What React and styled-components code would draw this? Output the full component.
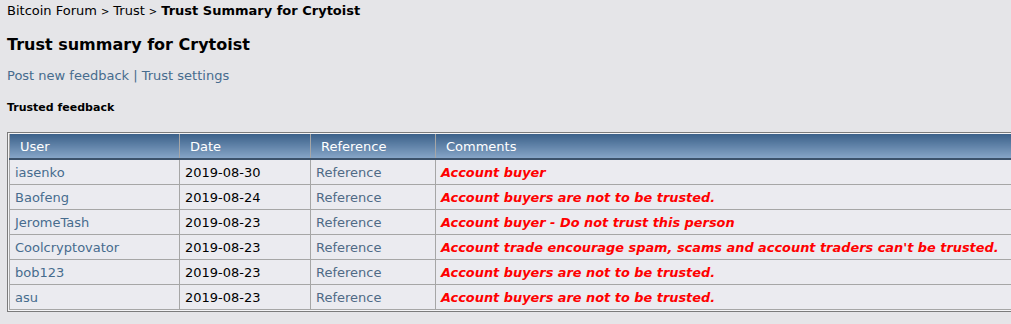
import React from "react";
import styled, { createGlobalStyle } from "styled-components";

const GlobalStyle = createGlobalStyle`
  html, body {
    margin: 0;
    padding: 0;
    background: #e5e5e8;
    overflow: hidden;
    font-family: Verdana, "DejaVu Sans", sans-serif;
  }
`;

const Page = styled.div`
  padding: 0 0 0 7px;
  color: #000;
`;

const Crumbs = styled.div`
  font-size: 13px;
  line-height: 22px;
`;

const Sep = styled.span`
  font-size: 10px;
  margin: 0 4px;
`;

const Title = styled.h1`
  margin: 11px 0 0;
  font-size: 16px;
  line-height: 22px;
  font-weight: bold;
`;

const Links = styled.div`
  margin-top: 9px;
  font-size: 13px;
  line-height: 22px;
  color: #476c8e;
`;

const Link = styled.a`
  color: #476c8e;
  text-decoration: none;
`;

const Section = styled.div`
  margin-top: 13px;
  font-size: 11px;
  font-weight: bold;
  line-height: 16px;
`;

const Frame = styled.div`
  margin-top: 16px;
  width: 1040px;
  border: 1px solid #7b7b7b;
  border-right: none;
  padding: 1px 0 1px 1px;
  background: #f4f4f6;
`;

const Table = styled.table`
  width: 100%;
  border-collapse: collapse;
  font-size: 13px;
`;

const Th = styled.th`
  height: 24px;
  padding: 0 0 0 10px;
  text-align: left;
  font-weight: normal;
  color: #fff;
  background: linear-gradient(#3b6089, #86a5c7);
  border: 1px solid #a6a6a6;
  border-bottom: 2px solid #3c526b;
  border-top: none;
  width: ${(p) => p.$w || "auto"};
`;

const Td = styled.td`
  height: 24px;
  padding: 0 0 0 5px;
  background: #ebebf0;
  border: 1px solid #a6a6a6;
  color: ${(p) => p.$color || "#000"};
  white-space: nowrap;
`;

const Comment = styled.span`
  color: #ff0000;
  font-weight: bold;
  font-style: italic;
  font-size: 12.9px;
`;

const rows = [
  ["iasenko", "2019-08-30", "Account buyer"],
  ["Baofeng", "2019-08-24", "Account buyers are not to be trusted."],
  ["JeromeTash", "2019-08-23", "Account buyer - Do not trust this person"],
  ["Coolcryptovator", "2019-08-23", "Account trade encourage spam, scams and account traders can't be trusted."],
  ["bob123", "2019-08-23", "Account buyers are not to be trusted."],
  ["asu", "2019-08-23", "Account buyers are not to be trusted."],
];

export default function App() {
  return (
    <Page>
      <GlobalStyle />
      <Crumbs>
        Bitcoin Forum<Sep>&gt;</Sep>Trust<Sep>&gt;</Sep>
        <b>Trust Summary for Crytoist</b>
      </Crumbs>
      <Title>Trust summary for Crytoist</Title>
      <Links>
        <Link href="#">Post new feedback</Link> | <Link href="#">Trust settings</Link>
      </Links>
      <Section>Trusted feedback</Section>
      <Frame>
        <Table>
          <thead>
            <tr>
              <Th $w="159px">User</Th>
              <Th $w="120px">Date</Th>
              <Th $w="114px">Reference</Th>
              <Th>Comments</Th>
            </tr>
          </thead>
          <tbody>
            {rows.map(([user, date, text]) => (
              <tr key={user}>
                <Td $color="#476c8e">{user}</Td>
                <Td>{date}</Td>
                <Td $color="#4f6a86">Reference</Td>
                <Td>
                  <Comment>{text}</Comment>
                </Td>
              </tr>
            ))}
          </tbody>
        </Table>
      </Frame>
    </Page>
  );
}
